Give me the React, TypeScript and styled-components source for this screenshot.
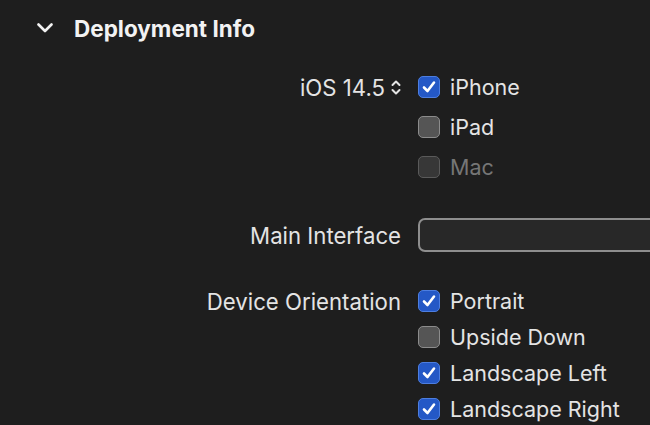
import * as React from 'react';
import styled, { createGlobalStyle } from 'styled-components';

const GlobalStyle = createGlobalStyle`
  html, body {
    margin: 0;
    padding: 0;
    background: #1e1e1e;
    overflow: hidden;
  }
  body {
    font-family: Inter, 'Liberation Sans', sans-serif;
    color: #e4e4e4;
  }
`;

type TCheck = { label: string; checked?: boolean; disabled?: boolean };

const Page = styled.div`
  width: 650px;
  height: 425px;
  overflow: hidden;
`;

const Header = styled.div`
  height: 56px;
  display: flex;
  align-items: center;
  padding-left: 37px;
  gap: 21px;
  h2 {
    margin: 0;
    font-size: 22.5px;
    font-weight: 700;
    color: #f2f2f2;
  }
`;

const Form = styled.div`
  margin-top: 11px;
  display: grid;
  grid-template-columns: 401px 1fr;
  column-gap: 17px;
  row-gap: 31px;
  align-items: start;
`;

const Label = styled.div<{ $height: number }>`
  height: ${(p) => p.$height}px;
  display: flex;
  align-items: center;
  justify-content: flex-end;
  gap: 6px;
  font-size: 22.2px;
  white-space: nowrap;
`;

const CheckGroup = styled.div<{ $rowHeight: number }>`
  display: grid;
  grid-auto-rows: ${(p) => p.$rowHeight}px;
`;

const CheckRow = styled.label<{ $disabled?: boolean }>`
  display: flex;
  align-items: center;
  gap: 10px;
  font-size: 21.5px;
  color: ${(p) => (p.$disabled ? '#767676' : '#e4e4e4')};
  white-space: nowrap;
`;

const Box = styled.span<{ $checked?: boolean; $disabled?: boolean }>`
  width: 22px;
  height: 22px;
  box-sizing: border-box;
  border-radius: 5px;
  display: flex;
  align-items: center;
  justify-content: center;
  background: ${(p) => (p.$checked ? '#2458c6' : p.$disabled ? '#373737' : '#555555')};
  border: 1.5px solid ${(p) => (p.$checked ? '#4d7ee0' : p.$disabled ? '#5a5a5a' : '#8c8c8c')};
`;

const Field = styled.div`
  width: 320px;
  height: 34px;
  box-sizing: border-box;
  border-radius: 7px;
  background: #282828;
  border: 2px solid #8e8e8e;
`;

const Chevron = () => (
  <svg width="16" height="10" viewBox="0 0 16 10">
    <path d="M1.5 1.5 L8 8 L14.5 1.5" fill="none" stroke="#f2f2f2" strokeWidth="2.6" strokeLinecap="round" strokeLinejoin="round" />
  </svg>
);

const UpDown = () => (
  <svg width="10" height="15" viewBox="0 0 10 15">
    <path d="M1.5 5 L5 1.5 L8.5 5 M1.5 10 L5 13.5 L8.5 10" fill="none" stroke="#e4e4e4" strokeWidth="2" strokeLinecap="round" strokeLinejoin="round" />
  </svg>
);

const Tick = () => (
  <svg width="16" height="16" viewBox="0 0 16 16">
    <path d="M3 8.5 L6.5 12 L13 3.5" fill="none" stroke="#ffffff" strokeWidth="2.6" strokeLinecap="round" strokeLinejoin="round" />
  </svg>
);

const Checks = ({ items, rowHeight }: { items: TCheck[]; rowHeight: number }) => (
  <CheckGroup $rowHeight={rowHeight}>
    {items.map((c) => (
      <CheckRow key={c.label} $disabled={c.disabled}>
        <Box $checked={c.checked} $disabled={c.disabled}>
          {c.checked ? <Tick /> : null}
        </Box>
        {c.label}
      </CheckRow>
    ))}
  </CheckGroup>
);

const devices: TCheck[] = [
  { label: 'iPhone', checked: true },
  { label: 'iPad' },
  { label: 'Mac', disabled: true },
];

const orientations: TCheck[] = [
  { label: 'Portrait', checked: true },
  { label: 'Upside Down' },
  { label: 'Landscape Left', checked: true },
  { label: 'Landscape Right', checked: true },
];

export default function App() {
  return (
    <Page>
      <GlobalStyle />
      <Header>
        <Chevron />
        <h2>Deployment Info</h2>
      </Header>
      <Form>
        <Label $height={40}>
          iOS 14.5 <UpDown />
        </Label>
        <Checks items={devices} rowHeight={40} />

        <Label $height={34}>Main Interface</Label>
        <Field />

        <Label $height={36}>Device Orientation</Label>
        <Checks items={orientations} rowHeight={36} />
      </Form>
    </Page>
  );
}
